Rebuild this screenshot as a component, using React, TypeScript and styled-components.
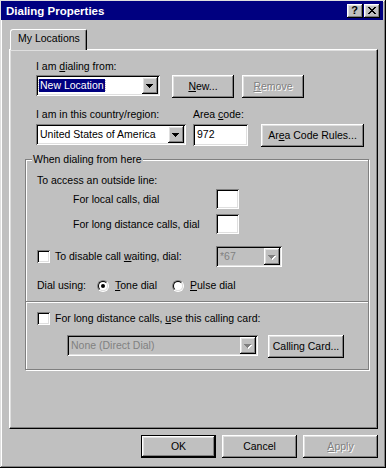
import React from 'react'
import styled, { createGlobalStyle, css } from 'styled-components'

const GlobalStyle = createGlobalStyle`
    html, body {
        margin: 0;
        padding: 0;
        background: #c0c0c0;
    }
    * {
        box-sizing: border-box;
    }
    body {
        font-family: "Liberation Sans", Arial, sans-serif;
        font-size: 10.5px;
        color: #000;
    }
`

const raised = css`
    background: #c0c0c0;
    box-shadow: inset -1px -1px #000, inset 1px 1px #fff, inset -2px -2px #808080, inset 2px 2px #dfdfdf;
`

const sunken = css`
    box-shadow: inset 1px 1px #808080, inset -1px -1px #fff, inset 2px 2px #000, inset -2px -2px #dfdfdf;
`

const Window = styled.div`
    width: 386px;
    height: 468px;
    padding: 1px 3px 3px 1px;
    background: #c0c0c0;
    box-shadow: inset -1px -1px #000, inset 1px 1px #dfdfdf, inset -2px -2px #808080, inset 2px 2px #fff;
    display: flex;
    flex-direction: column;
`

const TitleBar = styled.div`
    height: 19px;
    background: #000080;
    display: flex;
    align-items: center;
    justify-content: space-between;
    padding: 0 3px 0 5px;
`

const TitleText = styled.span`
    color: #fff;
    font-weight: 700;
    font-size: 11.5px;
    line-height: 14px;
`

const CaptionButtons = styled.div`
    display: flex;
    gap: 1px;
`

const CaptionButton = styled.span`
    ${raised};
    width: 16px;
    height: 14px;
    display: flex;
    align-items: center;
    justify-content: center;
    font-weight: 700;
    font-size: 11px;
    line-height: 11px;
    padding: 0 1px 1px 0;
`

const Body = styled.div`
    padding: 9px 0 0 8px;
    display: flex;
    flex-direction: column;
`

const Tab = styled.div`
    position: relative;
    z-index: 1;
    width: 77px;
    height: 21px;
    margin: 0 0 -1px 1px;
    padding: 2px 0 0 7px;
    background: #c0c0c0;
    border: 1px solid;
    border-bottom: none;
    border-color: #fff #000 transparent #fff;
    border-radius: 3px 2px 0 0;
    box-shadow: inset -1px 0 #808080;
    line-height: 13px;
`

const Panel = styled.div`
    width: 369px;
    height: 380px;
    border: 1px solid;
    border-color: #fff #000 #000 #fff;
    box-shadow: inset -1px -1px #808080, inset 1px 1px #dfdfdf;
    padding: 10px 0 0 15px;
`

const LocationArea = styled.div`
    padding-left: 11px;
`

const Row = styled.div<{ $top?: number }>`
    display: flex;
    align-items: flex-start;
    margin-top: ${p => p.$top ?? 0}px;
`

const Field = styled.div<{ $left?: number; $gap?: number }>`
    display: flex;
    flex-direction: column;
    gap: ${p => p.$gap ?? 2}px;
    margin-left: ${p => p.$left ?? 0}px;
`

const Label = styled.span`
    line-height: 13px;
    white-space: nowrap;
`

const Key = styled.span`
    text-decoration: underline;
    text-underline-offset: 1px;
`

const Actions = styled.div<{ $top: number; $left: number }>`
    display: flex;
    gap: 8px;
    margin-top: ${p => p.$top}px;
    margin-left: ${p => p.$left}px;
`

const Combo = styled.div<{ $width: number; $disabled?: boolean }>`
    ${sunken};
    width: ${p => p.$width}px;
    height: 21px;
    padding: 2px;
    display: flex;
    align-items: center;
    background: ${p => (p.$disabled ? '#c0c0c0' : '#fff')};
    color: ${p => (p.$disabled ? '#808080' : '#000')};
`

const ComboValue = styled.span`
    flex: 1;
    padding-left: 2px;
    line-height: 13px;
    white-space: nowrap;
    overflow: hidden;
`

const Selected = styled.span`
    display: inline-block;
    margin-left: -1px;
    padding: 0 1px;
    background: #000080;
    color: #fff;
    outline: 1px dotted #c0c0c0;
    outline-offset: 0;
`

const DropButton = styled.span`
    ${raised};
    width: 16px;
    height: 17px;
    display: flex;
    align-items: center;
    justify-content: center;
    padding: 1px 1px 0 0;
`

const TextBox = styled.div<{ $width: number; $height: number }>`
    ${sunken};
    width: ${p => p.$width}px;
    height: ${p => p.$height}px;
    background: #fff;
    padding: 4px 0 0 4px;
    line-height: 13px;
`

const Button = styled.button<{ $width: number; $default?: boolean }>`
    ${raised};
    width: ${p => p.$width}px;
    height: 23px;
    padding: 0 0 1px;
    border: ${p => (p.$default ? '1px solid #000' : 'none')};
    font: inherit;
    line-height: 13px;
    color: #000;
    white-space: nowrap;
    cursor: default;

    &:disabled {
        color: #808080;
        text-shadow: 1px 1px #fff;
    }
`

const GroupBox = styled.div`
    position: relative;
    width: 344px;
    margin-top: 12px;
    border: 1px solid #808080;
    box-shadow: inset 1px 1px #fff, 1px 1px #fff;
`

const Legend = styled.span`
    position: absolute;
    top: -7px;
    left: 6px;
    padding: 0 1px;
    background: #c0c0c0;
    line-height: 13px;
`

const Section = styled.div<{ $pad: string }>`
    padding: ${p => p.$pad};
`

const Divider = styled.div`
    height: 2px;
    border-top: 1px solid #808080;
    border-bottom: 1px solid #fff;
`

const DialRow = styled.div<{ $top: number }>`
    display: flex;
    align-items: center;
    margin-top: ${p => p.$top}px;
    padding-left: 36px;
`

const DialLabel = styled.span`
    width: 143px;
    line-height: 13px;
`

const CheckRow = styled.div<{ $top: number }>`
    display: flex;
    align-items: center;
    margin-top: ${p => p.$top}px;
`

const CheckBox = styled.span`
    ${sunken};
    width: 13px;
    height: 13px;
    background: #fff;
    flex: none;
`

const CheckLabel = styled.span<{ $width?: number }>`
    margin-left: 5px;
    line-height: 13px;
    white-space: nowrap;
    width: ${p => (p.$width ? `${p.$width}px` : 'auto')};
`

const RadioRow = styled.div`
    display: flex;
    align-items: center;
    margin-top: 12px;
    height: 13px;
`

const RadioCaption = styled.span`
    width: 60px;
    line-height: 13px;
`

const RadioOption = styled.span<{ $width?: number }>`
    display: flex;
    align-items: center;
    gap: 6px;
    width: ${p => (p.$width ? `${p.$width}px` : 'auto')};
    line-height: 13px;
`

const RadioOuter = styled.span`
    width: 12px;
    height: 12px;
    border-radius: 50%;
    border: 1px solid;
    border-color: #808080 #fff #fff #808080;
    display: flex;
`

const RadioInner = styled.span`
    width: 10px;
    height: 10px;
    border-radius: 50%;
    border: 1px solid;
    border-color: #000 #dfdfdf #dfdfdf #000;
    background: #fff;
    display: flex;
    align-items: center;
    justify-content: center;
`

const RadioDot = styled.span`
    width: 4px;
    height: 4px;
    border-radius: 50%;
    background: #000;
`

const CardRow = styled.div`
    display: flex;
    align-items: flex-start;
    gap: 10px;
    margin-top: 10px;
    padding-left: 30px;
`

const Footer = styled.div`
    width: 369px;
    display: flex;
    justify-content: flex-end;
    gap: 6px;
    margin-top: 6px;
`

const Arrow = ({ disabled }: { disabled?: boolean }) => {
    const d = 'M0 0h7v1H0z M1 1h5v1H1z M2 2h3v1H2z M3 3h1v1H3z'
    return (
        <svg width="8" height="5" viewBox="0 0 8 5" shapeRendering="crispEdges">
            {disabled && <path d={d} fill="#fff" transform="translate(1 1)" />}
            <path d={d} fill={disabled ? '#808080' : '#000'} />
        </svg>
    )
}

const CloseGlyph = () => (
    <svg width="8" height="7" viewBox="0 0 8 7" shapeRendering="crispEdges">
        <path
            d="M0 0h2v1H0z M6 0h2v1H6z M1 1h2v1H1z M5 1h2v1H5z M2 2h4v1H2z M3 3h2v1H3z M2 4h4v1H2z M1 5h2v1H1z M5 5h2v1H5z M0 6h2v1H0z M6 6h2v1H6z"
            fill="#000"
        />
    </svg>
)

const Radio = ({ checked }: { checked?: boolean }) => (
    <RadioOuter>
        <RadioInner>{checked && <RadioDot />}</RadioInner>
    </RadioOuter>
)

const App = () => {
    return (
        <>
            <GlobalStyle />
            <Window>
                <TitleBar>
                    <TitleText>Dialing Properties</TitleText>
                    <CaptionButtons>
                        <CaptionButton>?</CaptionButton>
                        <CaptionButton>
                            <CloseGlyph />
                        </CaptionButton>
                    </CaptionButtons>
                </TitleBar>
                <Body>
                    <Tab>My Locations</Tab>
                    <Panel>
                        <LocationArea>
                            <Row>
                                <Field>
                                    <Label>
                                        I am <Key>d</Key>ialing from:
                                    </Label>
                                    <Combo $width={124}>
                                        <ComboValue>
                                            <Selected>New Location</Selected>
                                        </ComboValue>
                                        <DropButton>
                                            <Arrow />
                                        </DropButton>
                                    </Combo>
                                </Field>
                                <Actions $top={15} $left={12}>
                                    <Button $width={62}>
                                        <Key>N</Key>ew...
                                    </Button>
                                    <Button $width={62} disabled>
                                        <Key>R</Key>emove
                                    </Button>
                                </Actions>
                            </Row>
                            <Row $top={10}>
                                <Field $gap={3}>
                                    <Label>I am in this country/region:</Label>
                                    <Combo $width={150}>
                                        <ComboValue>United States of America</ComboValue>
                                        <DropButton>
                                            <Arrow />
                                        </DropButton>
                                    </Combo>
                                </Field>
                                <Field $left={7} $gap={3}>
                                    <Label>
                                        Area <Key>c</Key>ode:
                                    </Label>
                                    <TextBox $width={55} $height={22}>
                                        972
                                    </TextBox>
                                </Field>
                                <Actions $top={16} $left={13}>
                                    <Button $width={103}>
                                        Ar<Key>e</Key>a Code Rules...
                                    </Button>
                                </Actions>
                            </Row>
                        </LocationArea>
                        <GroupBox>
                            <Legend>When dialing from here</Legend>
                            <Section $pad="14px 0 9px 11px">
                                <Label>To access an outside line:</Label>
                                <DialRow $top={2}>
                                    <DialLabel>For local calls, dial</DialLabel>
                                    <TextBox $width={23} $height={20} />
                                </DialRow>
                                <DialRow $top={5}>
                                    <DialLabel>For long distance calls, dial</DialLabel>
                                    <TextBox $width={23} $height={20} />
                                </DialRow>
                                <CheckRow $top={12}>
                                    <CheckBox />
                                    <CheckLabel $width={161}>
                                        To disable call <Key>w</Key>aiting, dial:
                                    </CheckLabel>
                                    <Combo $width={66} $disabled>
                                        <ComboValue>*67</ComboValue>
                                        <DropButton>
                                            <Arrow disabled />
                                        </DropButton>
                                    </Combo>
                                </CheckRow>
                                <RadioRow>
                                    <RadioCaption>Dial using:</RadioCaption>
                                    <RadioOption $width={75}>
                                        <Radio checked />
                                        <span>
                                            <Key>T</Key>one dial
                                        </span>
                                    </RadioOption>
                                    <RadioOption>
                                        <Radio />
                                        <span>
                                            <Key>P</Key>ulse dial
                                        </span>
                                    </RadioOption>
                                </RadioRow>
                            </Section>
                            <Divider />
                            <Section $pad="9px 0 11px 11px">
                                <CheckRow $top={0}>
                                    <CheckBox />
                                    <CheckLabel>
                                        For long distance calls, <Key>u</Key>se this calling card:
                                    </CheckLabel>
                                </CheckRow>
                                <CardRow>
                                    <Combo $width={191} $disabled>
                                        <ComboValue>None (Direct Dial)</ComboValue>
                                        <DropButton>
                                            <Arrow disabled />
                                        </DropButton>
                                    </Combo>
                                    <Button $width={76}>Calling Card...</Button>
                                </CardRow>
                            </Section>
                        </GroupBox>
                    </Panel>
                    <Footer>
                        <Button $width={75} $default>
                            OK
                        </Button>
                        <Button $width={75}>Cancel</Button>
                        <Button $width={75} disabled>
                            <Key>A</Key>pply
                        </Button>
                    </Footer>
                </Body>
            </Window>
        </>
    )
}

export default App
